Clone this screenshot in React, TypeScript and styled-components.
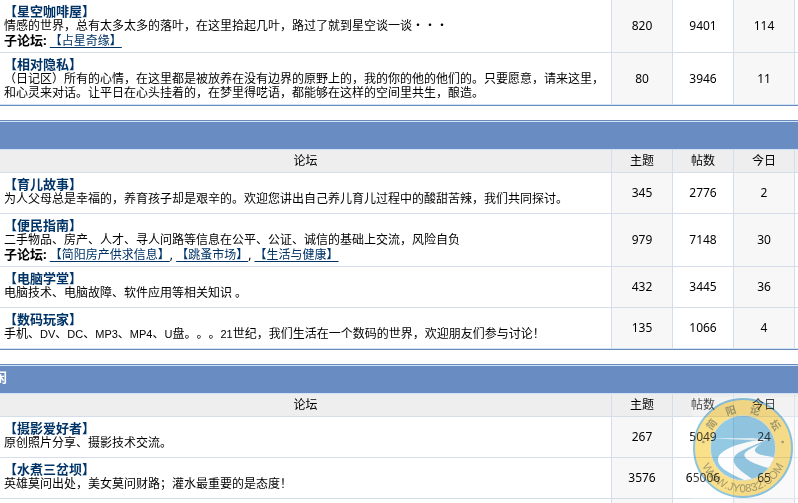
import React from "react";
import styled, { createGlobalStyle } from "styled-components";

const GlobalStyle = createGlobalStyle`
  body {
    margin: 0;
    background: #fff;
    color: #000;
    font: 12px/14px "Noto Sans", "Noto Sans CJK SC", sans-serif;
    text-spacing-trim: space-all;
  }
`;

const Page = styled.div`
  position: relative;
  display: flex;
  flex-direction: column;
  gap: 14px;
  overflow: hidden;
`;

const Category = styled.section<{ $continued?: boolean; $open?: boolean }>`
  border: solid #6a8cbc;
  border-width: ${(p) => (p.$continued ? 0 : 1)}px 0 ${(p) => (p.$open ? 0 : 1)}px;
`;

const CategoryTitle = styled.h2`
  box-sizing: border-box;
  height: 29px;
  margin: 0;
  padding: 3px 0;
  border: solid #cfe2f7;
  border-width: 1px 0;
  background: #698cc3;
  color: #fff;
  font-size: 13px;
  line-height: 16px;
  font-weight: bold;
  text-indent: -6px;
`;

const ForumTable = styled.table<{ $open?: boolean }>`
  width: 100%;
  table-layout: fixed;
  border-collapse: separate;
  border-spacing: 0;
  border-bottom: ${(p) => (p.$open ? "none" : "1px solid #cfe2f7")};

  tr:last-child td {
    border-bottom: none;
  }
`;

const Col = styled.col<{ $width?: number }>`
  width: ${(p) => (p.$width ? `${p.$width}px` : "auto")};
`;

const HeadCell = styled.th`
  height: 22px;
  padding: 0;
  background: #eee;
  border: solid #d5dde9;
  border-width: 0 1px 1px 0;
  font-weight: normal;

  &:last-child {
    border-right: none;
  }
`;

const ForumRow = styled.tr<{ $height: number }>`
  height: ${(p) => p.$height}px;
`;

const ForumCell = styled.td`
  padding: 4px 4px 0;
  vertical-align: top;
  border: solid #d5dde9;
  border-width: 0 1px 1px 0;
`;

const CountCell = styled.td<{ $shaded?: boolean }>`
  padding: 0;
  text-align: center;
  background: ${(p) => (p.$shaded ? "#f7f7f7" : "#fff")};
  border: solid #d5dde9;
  border-width: 0 1px 1px 0;
`;

const EdgeCell = styled.td`
  padding: 0;
  border-bottom: 1px solid #d5dde9;
`;

const ForumLink = styled.a`
  display: block;
  width: max-content;
  color: #003366;
  font-size: 13px;
  line-height: 15px;
  font-weight: bold;
  text-decoration: none;
`;

const Description = styled.p`
  margin: 0;
`;

const Latin = styled.span`
  font-family: "Liberation Sans", sans-serif;
  font-size: 11px;
`;

const SubForums = styled.div`
  line-height: 15px;
`;

const SubLabel = styled.strong`
  font-size: 13px;
`;

const SubLink = styled.a`
  color: #003366;
  text-decoration: underline;
  text-underline-offset: 2px;
`;

const Watermark = styled.svg`
  position: absolute;
  right: 4px;
  bottom: 4px;
  width: 102px;
  height: 102px;
  pointer-events: none;
  mix-blend-mode: multiply;
`;

const Haze = styled.div`
  position: absolute;
  right: 0;
  bottom: 4px;
  width: 106px;
  height: 102px;
  background: #fff;
  opacity: 0.25;
  pointer-events: none;
`;

type Forum = {
  name: string;
  text: string;
  subs?: string[];
  topics: string;
  posts: string;
  today: string;
  height: number;
};

type Group = { title?: string; continued?: boolean; open?: boolean; forums: Forum[] };

const groups: Group[] = [
  {
    continued: true,
    forums: [
      {
        name: "【星空咖啡屋】",
        text: "情感的世界，总有太多太多的落叶，在这里拾起几叶，路过了就到星空谈一谈・・・",
        subs: ["【占星奇缘】"],
        topics: "820",
        posts: "9401",
        today: "114",
        height: 53,
      },
      {
        name: "【相对隐私】",
        text: "（日记区）所有的心情，在这里都是被放养在没有边界的原野上的，我的你的他的他们的。只要愿意，请来这里，和心灵来对话。让平日在心头挂着的，在梦里得呓语，都能够在这样的空间里共生，酿造。",
        topics: "80",
        posts: "3946",
        today: "11",
        height: 51,
      },
    ],
  },
  {
    forums: [
      {
        name: "【育儿故事】",
        text: "为人父母总是幸福的，养育孩子却是艰辛的。欢迎您讲出自己养儿育儿过程中的酸甜苦辣，我们共同探讨。",
        topics: "345",
        posts: "2776",
        today: "2",
        height: 41,
      },
      {
        name: "【便民指南】",
        text: "二手物品、房产、人才、寻人问路等信息在公平、公证、诚信的基础上交流，风险自负",
        subs: ["【简阳房产供求信息】", "【跳蚤市场】", "【生活与健康】"],
        topics: "979",
        posts: "7148",
        today: "30",
        height: 53,
      },
      {
        name: "【电脑学堂】",
        text: "电脑技术、电脑故障、软件应用等相关知识 。",
        topics: "432",
        posts: "3445",
        today: "36",
        height: 41,
      },
      {
        name: "【数码玩家】",
        text: "手机、DV、DC、MP3、MP4、U盘。。。21世纪，我们生活在一个数码的世界，欢迎朋友们参与讨论！",
        topics: "135",
        posts: "1066",
        today: "4",
        height: 40,
      },
    ],
  },
  {
    title: "闲",
    open: true,
    forums: [
      {
        name: "【摄影爱好者】",
        text: "原创照片分享、摄影技术交流。",
        topics: "267",
        posts: "5049",
        today: "24",
        height: 41,
      },
      {
        name: "【水煮三岔坝】",
        text: "英雄莫问出处，美女莫问财路；灌水最重要的是态度！",
        topics: "3576",
        posts: "65006",
        today: "65",
        height: 41,
      },
    ],
  },
];

function MixedText({ text }: { text: string }) {
  return (
    <>
      {text
        .split(/([A-Z0-9]+)/)
        .map((part, i) => (i % 2 ? <Latin key={i}>{part}</Latin> : part))}
    </>
  );
}

function Row({ forum }: { forum: Forum }) {
  return (
    <ForumRow $height={forum.height}>
      <ForumCell>
        <ForumLink href="#">{forum.name}</ForumLink>
        <Description>
          <MixedText text={forum.text} />
        </Description>
        {forum.subs && (
          <SubForums>
            <SubLabel>子论坛:</SubLabel>{" "}
            {forum.subs.map((sub, i) => (
              <React.Fragment key={sub}>
                {i > 0 && ", "}
                <SubLink href="#">{sub}</SubLink>
              </React.Fragment>
            ))}
          </SubForums>
        )}
      </ForumCell>
      <CountCell $shaded>{forum.topics}</CountCell>
      <CountCell>{forum.posts}</CountCell>
      <CountCell $shaded>{forum.today}</CountCell>
      <EdgeCell />
    </ForumRow>
  );
}

function SiteSeal() {
  const top: [string, number][] = [
    ["简", -53],
    ["阳", -18],
    ["论", 18],
    ["坛", 55],
  ];
  return (
    <Watermark viewBox="-153 -153 306 306" aria-hidden="true">
      <defs>
        <clipPath id="seal-core">
          <circle r="97" />
        </clipPath>
        <path id="seal-arc" d="M-133 0 A133 133 0 0 0 133 0" />
      </defs>
      <circle r="147" fill="#fbe08a" stroke="#8cc5df" strokeWidth="6" />
      <circle r="98" fill="#94c9e4" stroke="#e9e6bd" strokeWidth="3" />
      <g clipPath="url(#seal-core)" fill="#fff">
        <path d="M-98 -29 L30 -30 L60 -26 L30 -23 Z" opacity="0.7" />
        <path d="M72 -27 C40 -26 -68 -6 -75 32 C-79 62 -25 82 8 98 L34 98 C8 78 -32 56 -28 34 C-24 6 46 -8 72 -27 Z" />
        <path d="M74 -27 C62 -14 34 -4 36 8 C40 22 72 22 100 30 L100 66 C66 58 6 42 4 22 C4 2 58 -8 74 -27 Z" />
      </g>
      <g fill="#a69c70" fontFamily='"Noto Sans CJK SC", sans-serif' fontSize="31" fontWeight="bold">
        {top.map(([char, angle]) => (
          <text key={char} textAnchor="middle" y="-107" transform={`rotate(${angle})`}>
            {char}
          </text>
        ))}
      </g>
      <circle cx="-119" cy="-18" r="4" fill="#a69c70" />
      <circle cx="119" cy="-18" r="4" fill="#a69c70" />
      <text fill="#a69c70" fontFamily='"Liberation Sans", sans-serif' fontSize="34" textAnchor="middle">
        <textPath href="#seal-arc" startOffset="50%">
          WWW.JY0832.COM
        </textPath>
      </text>
    </Watermark>
  );
}

export default function App() {
  return (
    <>
      <GlobalStyle />
      <Page>
        {groups.map((group, i) => (
          <Category key={i} $continued={group.continued} $open={group.open}>
            {!group.continued && <CategoryTitle>{group.title}</CategoryTitle>}
            <ForumTable $open={group.open}>
              <colgroup>
                <Col />
                <Col $width={61} />
                <Col $width={61} />
                <Col $width={61} />
                <Col $width={3} />
              </colgroup>
              {!group.continued && (
                <thead>
                  <tr>
                    <HeadCell scope="col">论坛</HeadCell>
                    <HeadCell scope="col">主题</HeadCell>
                    <HeadCell scope="col">帖数</HeadCell>
                    <HeadCell scope="col">今日</HeadCell>
                    <HeadCell />
                  </tr>
                </thead>
              )}
              <tbody>
                {group.forums.map((forum) => (
                  <Row key={forum.name} forum={forum} />
                ))}
                {group.open && (
                  <ForumRow $height={4}>
                    <ForumCell />
                    <CountCell $shaded />
                    <CountCell />
                    <CountCell $shaded />
                    <EdgeCell />
                  </ForumRow>
                )}
              </tbody>
            </ForumTable>
          </Category>
        ))}
        <Haze />
        <SiteSeal />
      </Page>
    </>
  );
}
